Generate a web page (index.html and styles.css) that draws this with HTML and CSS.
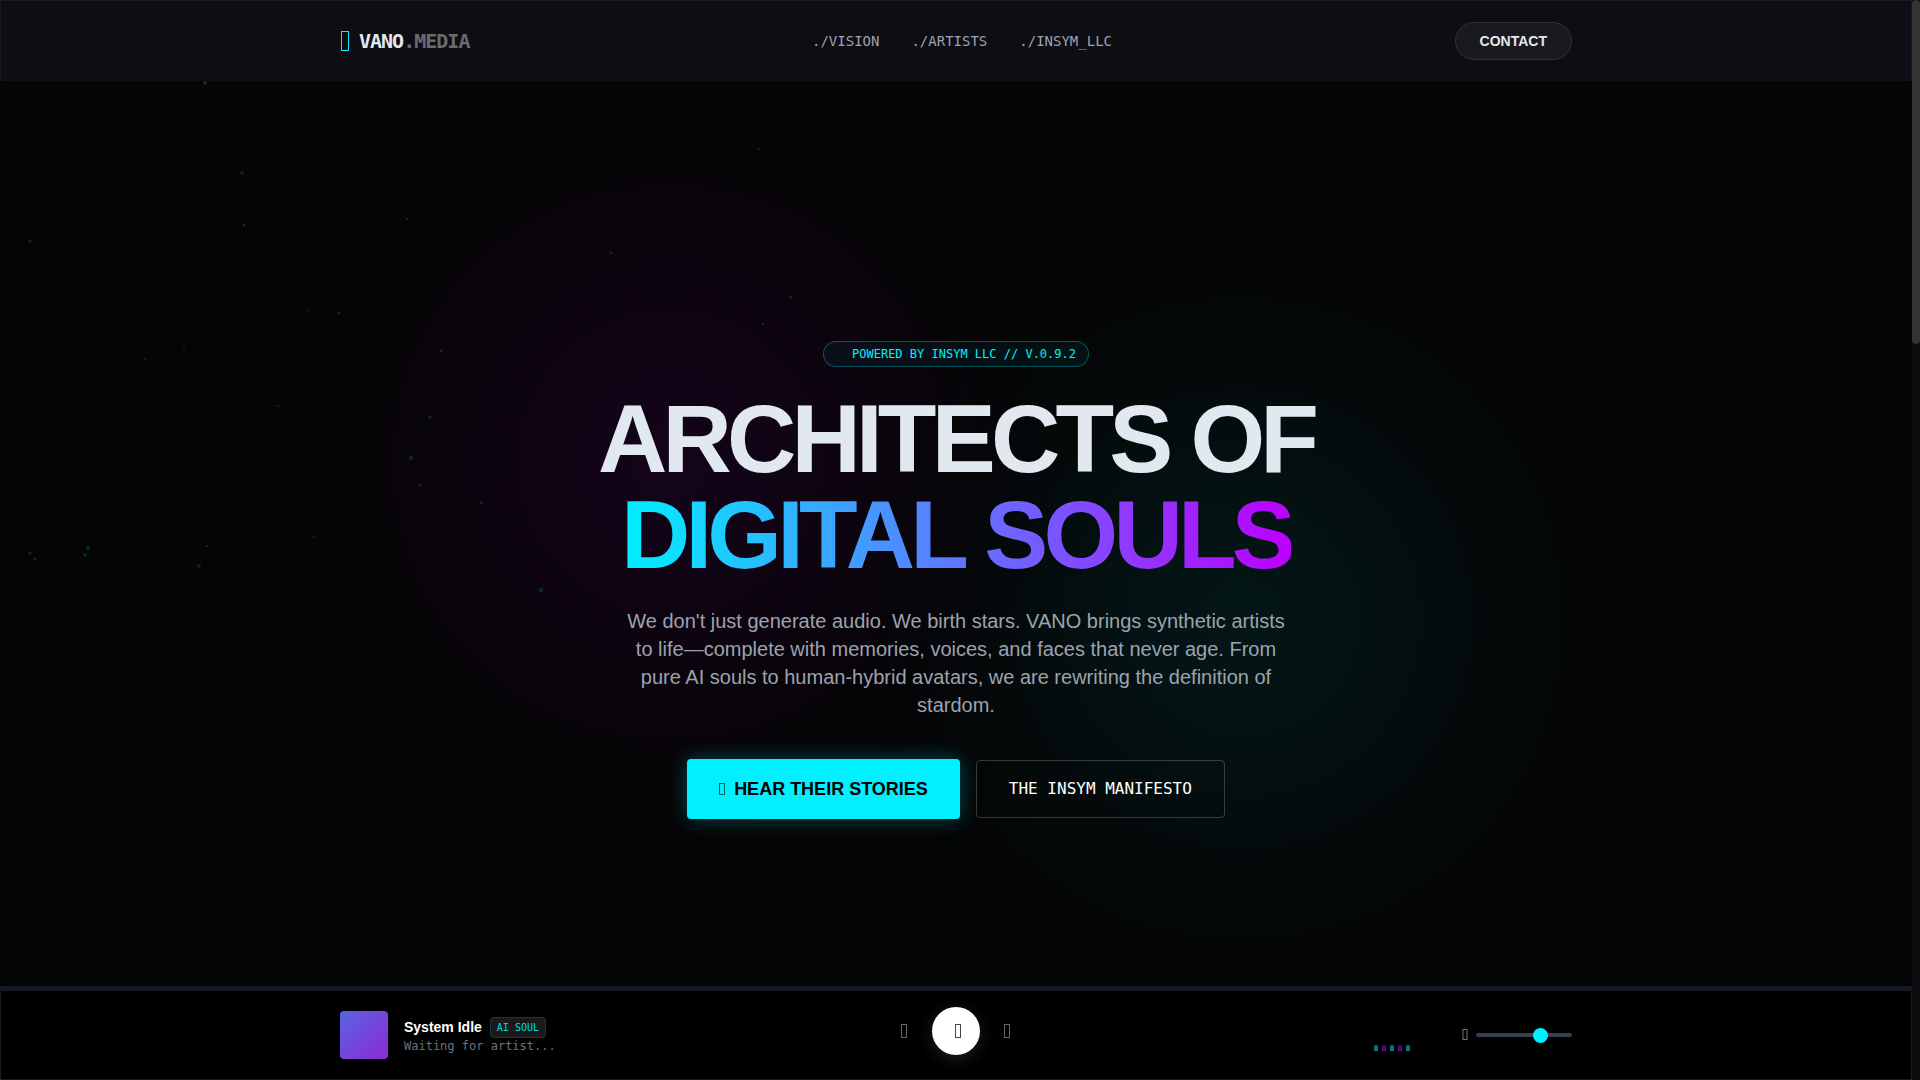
FILE: index.html
```html
<!DOCTYPE html>
<html lang="en">

<head>
    <meta charset="UTF-8">
    <meta name="viewport" content="width=device-width, initial-scale=1.0">
    <title>VANO.MEDIA</title>
    <link rel="stylesheet" href="styles.css">
</head>

<body>
    <header class="navbar">
        <div class="container nav-inner">
            <a class="logo" href="#">
                <svg class="logo-icon" width="11" height="20" viewBox="0 0 11 20"><rect x="1.5" y="0.5" width="7" height="19" fill="none" stroke="currentColor"/></svg>
                <span class="logo-text">VANO<span class="logo-dim">.MEDIA</span></span>
            </a>
            <nav class="nav-links">
                <a href="#vision">./VISION</a>
                <a href="#artists">./ARTISTS</a>
                <a href="#insym">./INSYM_LLC</a>
            </nav>
            <button class="contact" type="button">CONTACT</button>
        </div>
    </header>

    <main class="hero">
        <div class="orb orb-purple"></div>
        <div class="orb orb-cyan"></div>

        <svg class="particles" aria-hidden="true">
            <circle cx="205" cy="83" r="2"/>
            <circle cx="242" cy="173" r="1.8"/>
            <circle cx="244" cy="225" r="1.3"/>
            <circle cx="30" cy="241" r="1.6"/>
            <circle cx="407" cy="219" r="1.2"/>
            <circle cx="611" cy="253" r="1.3"/>
            <circle cx="308" cy="310" r="0.9"/>
            <circle cx="339" cy="313" r="1.6"/>
            <circle cx="184" cy="349" r="1"/>
            <circle cx="145" cy="359" r="1"/>
            <circle cx="441" cy="351" r="1.6"/>
            <circle cx="278" cy="406" r="1.1"/>
            <circle cx="430" cy="417" r="1.8"/>
            <circle cx="411" cy="458" r="1.9"/>
            <circle cx="420" cy="485" r="1.6"/>
            <circle cx="481" cy="503" r="1.6"/>
            <circle cx="314" cy="537" r="1"/>
            <circle cx="207" cy="546" r="1.2"/>
            <circle cx="88" cy="548" r="1.9"/>
            <circle cx="85" cy="555" r="1.8"/>
            <circle cx="30" cy="553" r="1.6"/>
            <circle cx="35" cy="559" r="1.6"/>
            <circle cx="199" cy="566" r="1.8"/>
            <circle cx="541" cy="590" r="2"/>
            <circle cx="600" cy="339" r="0.7"/>
            <circle cx="759" cy="149" r="1.1"/>
            <circle cx="651" cy="192" r="0.9"/>
            <circle cx="791" cy="297" r="1.7"/>
            <circle cx="763" cy="324" r="1.1"/>
        </svg>

        <div class="hero-content">
            <div class="tag"><span class="dot"></span>POWERED BY INSYM LLC // V.0.9.2</div>
            <h1>ARCHITECTS OF<br><span class="gradient-text">DIGITAL SOULS</span></h1>
            <p class="lead">We don't just generate audio. We birth stars. VANO brings synthetic artists to life—complete with memories, voices, and faces that never age. From pure AI souls to human-hybrid avatars, we are rewriting the definition of stardom.</p>
            <div class="actions">
                <button class="btn-primary" type="button">
                    <svg width="7" height="12" viewBox="0 0 7 12"><rect x="0.5" y="0.5" width="5" height="11" fill="none" stroke="currentColor" stroke-opacity="0.6"/></svg>
                    HEAR THEIR STORIES
                </button>
                <button class="btn-outline" type="button">THE INSYM MANIFESTO</button>
            </div>
        </div>
    </main>

    <footer class="player">
        <div class="progress"></div>
        <div class="player-bar">
            <div class="container player-inner">
                <div class="track">
                    <div class="cover"></div>
                    <div>
                        <div class="track-title">System Idle <span class="badge">AI SOUL</span></div>
                        <div class="track-sub">Waiting for artist...</div>
                    </div>
                </div>

                <div class="controls">
                    <button class="skip" type="button" aria-label="Previous">
                        <svg width="8" height="14" viewBox="0 0 8 14"><rect x="1.5" y="0.5" width="5" height="13" fill="none" stroke="currentColor"/></svg>
                    </button>
                    <button class="play" type="button" aria-label="Play">
                        <svg width="8" height="14" viewBox="0 0 8 14"><rect x="1.5" y="0.5" width="5" height="13" fill="none" stroke="currentColor"/></svg>
                    </button>
                    <button class="skip" type="button" aria-label="Next">
                        <svg width="8" height="14" viewBox="0 0 8 14"><rect x="0.5" y="0.5" width="5" height="13" fill="none" stroke="currentColor"/></svg>
                    </button>
                </div>

                <div class="extras">
                    <div class="bars">
                        <span></span><span></span><span></span><span></span><span></span>
                    </div>
                    <label class="volume">
                        <svg width="6" height="12" viewBox="0 0 6 12"><rect x="1" y="0.5" width="4" height="10" fill="none" stroke="currentColor"/></svg>
                        <input type="range" min="0" max="100" value="70" aria-label="Volume">
                    </label>
                </div>
            </div>
        </div>
    </footer>

    <div class="scrollbar"><div class="scroll-thumb"></div></div>
</body>

</html>
```
FILE: styles.css
```css
* {
    box-sizing: border-box;
    margin: 0;
    padding: 0;
}

:root {
    --cyan: #00f0ff;
    --purple: #bc00ff;
    --mono: "DejaVu Sans Mono", monospace;
}

body {
    padding-right: 8px;
    background: #050505;
    color: #e2e8f0;
    font-family: "Liberation Sans", Arial, sans-serif;
    line-height: 24px;
}

button {
    font-family: inherit;
    border: none;
    cursor: pointer;
}

a {
    color: inherit;
    text-decoration: none;
}

svg {
    display: block;
    flex-shrink: 0;
}

.container {
    width: 100%;
    max-width: 1280px;
    margin: 0 auto;
    padding: 0 24px;
}

/* navbar */
.navbar {
    position: fixed;
    top: 0;
    left: 0;
    right: 8px;
    z-index: 10;
    background: #0e0d13;
    border: 1px solid #1a191f;
    border-bottom: none;
}

.nav-inner {
    height: 80px;
    display: flex;
    align-items: center;
    justify-content: space-between;
}

.logo {
    display: flex;
    align-items: center;
    gap: 8px;
}

.logo-icon {
    color: var(--cyan);
}

.logo-text {
    font-family: var(--mono);
    font-size: 20px;
    font-weight: bold;
    letter-spacing: -1px;
}

.logo-dim {
    color: #6b6b6f;
}

.nav-links {
    display: flex;
    gap: 32px;
    font-family: var(--mono);
    font-size: 14px;
    color: #9ca3af;
}

.contact {
    padding: 8px 24px;
    border: 1px solid #313136;
    border-radius: 20px;
    background: #1a191e;
    color: #e2e8f0;
    font-size: 14px;
    font-weight: bold;
    line-height: 20px;
}

/* hero */
.hero {
    position: relative;
    overflow: hidden;
    min-height: 100vh;
    padding-top: 80px;
    display: flex;
    align-items: center;
    justify-content: center;
}

.orb {
    position: absolute;
    width: 384px;
    height: 384px;
    border-radius: 50%;
    filter: blur(120px);
}

.orb-purple {
    top: 25%;
    left: 25%;
    background: var(--purple);
    opacity: 0.1;
}

.orb-cyan {
    bottom: 25%;
    right: 25%;
    background: var(--cyan);
    opacity: 0.09;
}

.particles {
    position: absolute;
    top: 0;
    left: 0;
    width: 100%;
    height: 100%;
    fill: var(--cyan);
    opacity: 0.17;
}

.hero-content {
    position: relative;
    display: flex;
    flex-direction: column;
    align-items: center;
    text-align: center;
}

.tag {
    display: flex;
    align-items: center;
    gap: 8px;
    padding: 4px 12px;
    margin-bottom: 24px;
    border: 1px solid rgba(0, 240, 255, 0.3);
    border-radius: 13px;
    background: rgba(0, 240, 255, 0.05);
    color: var(--cyan);
    font-family: var(--mono);
    font-size: 12px;
    line-height: 16px;
}

.dot {
    width: 8px;
    height: 8px;
}

h1 {
    margin-bottom: 24px;
    font-size: 96px;
    font-weight: bold;
    line-height: 96px;
    letter-spacing: -0.05em;
}

.gradient-text {
    background: linear-gradient(to right, var(--cyan), var(--purple));
    -webkit-background-clip: text;
    background-clip: text;
    color: transparent;
}

.lead {
    max-width: 672px;
    margin-bottom: 40px;
    color: #9ca3af;
    font-size: 20px;
    line-height: 28px;
}

.actions {
    display: flex;
    align-items: center;
    gap: 16px;
}

.btn-primary {
    display: flex;
    align-items: center;
    gap: 8px;
    padding: 16px 32px;
    border-radius: 4px;
    background: var(--cyan);
    color: #000;
    font-size: 18px;
    font-weight: bold;
    line-height: 28px;
    box-shadow: 0 0 20px rgba(0, 240, 255, 0.3);
}

.btn-outline {
    padding: 16px 32px;
    border: 1px solid rgba(255, 255, 255, 0.2);
    border-radius: 4px;
    background: none;
    color: #fff;
    font-family: var(--mono);
    font-size: 16px;
    line-height: 24px;
}

/* player */
.player {
    position: fixed;
    left: 0;
    right: 8px;
    bottom: 0;
    z-index: 10;
}

.progress {
    height: 4px;
    background: #111827;
}

.player-bar {
    background: #000;
    border: 1px solid #1c1c1c;
}

.player-inner {
    height: 88px;
    display: grid;
    grid-template-columns: 1fr auto 1fr;
    align-items: center;
}

.track {
    display: flex;
    align-items: center;
    gap: 16px;
}

.cover {
    width: 48px;
    height: 48px;
    border-radius: 4px;
    background: linear-gradient(to bottom right, #5b63e0, #8a2bd6);
}

.track-title {
    display: flex;
    align-items: center;
    gap: 8px;
    color: #fff;
    font-size: 14px;
    font-weight: bold;
    line-height: 20px;
}

.badge {
    padding: 2px 6px;
    border: 1px solid #0b4245;
    border-radius: 4px;
    background: #1a1a1a;
    color: #00dbe6;
    font-family: var(--mono);
    font-size: 10px;
    font-weight: normal;
    line-height: 15px;
}

.track-sub {
    color: #6b7280;
    font-family: var(--mono);
    font-size: 12px;
    line-height: 16px;
}

.controls {
    display: flex;
    align-items: center;
    gap: 24px;
    padding-bottom: 8px;
}

.skip {
    background: none;
    color: #5f6571;
}

.play {
    width: 48px;
    height: 48px;
    padding-left: 4px;
    display: flex;
    align-items: center;
    justify-content: center;
    border-radius: 50%;
    background: #fff;
    color: #444;
    box-shadow: 0 4px 16px rgba(255, 255, 255, 0.12);
}

.extras {
    display: flex;
    align-items: center;
    justify-content: flex-end;
    gap: 52px;
}

.bars {
    height: 32px;
    display: flex;
    align-items: flex-end;
    gap: 4px;
}

.bars span {
    width: 4px;
    height: 6px;
    border-radius: 2px 2px 0 0;
    background: var(--cyan);
    opacity: 0.5;
}

.bars span:nth-child(even) {
    background: var(--purple);
}

.volume {
    display: flex;
    align-items: center;
    gap: 8px;
    color: #6b7280;
}

.volume input {
    -webkit-appearance: none;
    appearance: none;
    width: 96px;
    height: 4px;
    border-radius: 2px;
    background: #374151;
}

.volume input::-webkit-slider-thumb {
    -webkit-appearance: none;
    width: 15px;
    height: 15px;
    border-radius: 50%;
    background: var(--cyan);
}

/* page scrollbar */
.scrollbar {
    position: fixed;
    top: 0;
    right: 0;
    bottom: 0;
    width: 8px;
    background: #0a0a0f;
}

.scroll-thumb {
    height: 344px;
    border-radius: 4px;
    background: #333;
}
```
